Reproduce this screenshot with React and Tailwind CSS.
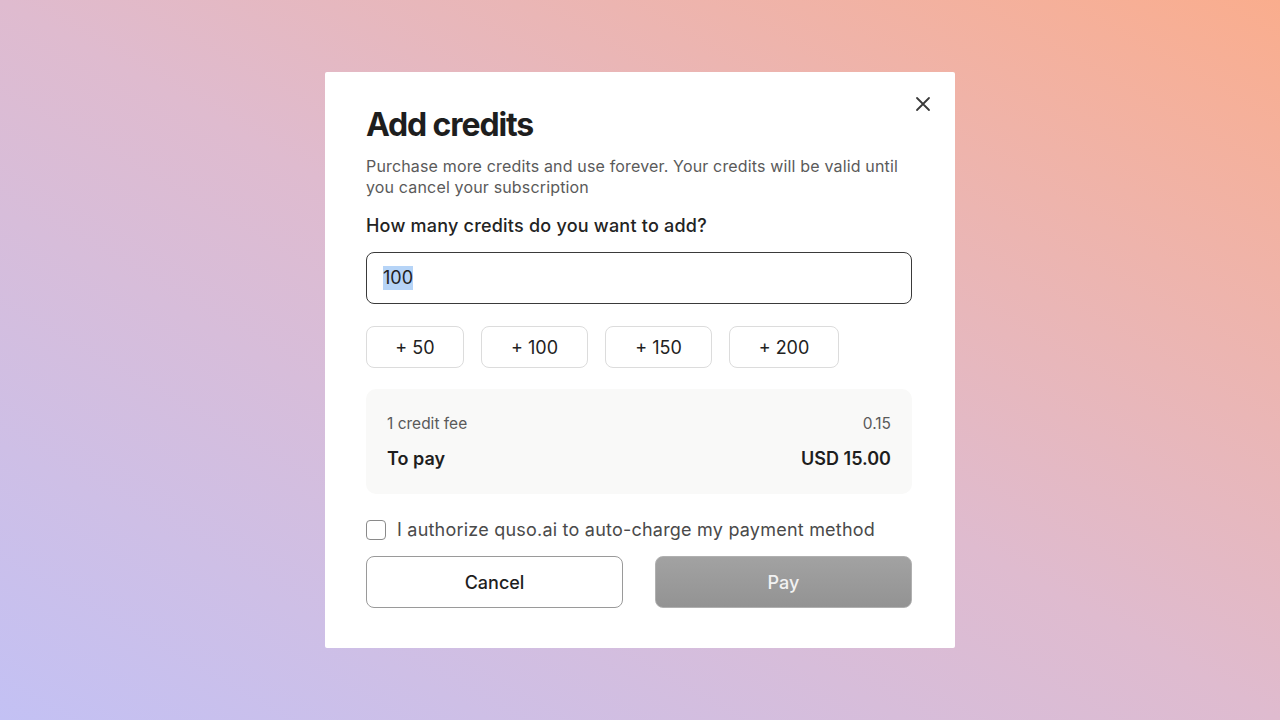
import React, { useState } from "react";

const quickAdds = [
  { label: "+ 50", w: "w-[98px]" },
  { label: "+ 100", w: "w-[107px]" },
  { label: "+ 150", w: "w-[107px]" },
  { label: "+ 200", w: "w-[110px]" },
];

export default function App() {
  const [agree, setAgree] = useState(false);

  return (
    <div
      className="w-full h-[720px] flex items-start justify-center pt-[72px] bg-gradient-to-tr from-[#c3c1f4] via-[#dfbbcf] to-[#faad8d]"
      style={{ fontFamily: "Inter, 'Noto Sans', sans-serif" }}
    >
      {/* Modal */}
      <div className="relative w-[630px] h-[576px] bg-white rounded-[2px] pl-[41px] pr-[43px] pt-[34px]">
        <button className="absolute right-[24px] top-[24px] text-[#3a3a3a]">
          <svg width="16" height="16" viewBox="0 0 16 16" fill="none" stroke="currentColor" strokeWidth="1.8" strokeLinecap="round">
            <path d="M2 2L14 14M14 2L2 14" />
          </svg>
        </button>

        <h1 className="text-[32px] leading-[38px] font-bold tracking-[-0.035em] text-[#1e1e1e]">Add credits</h1>
        <p className="mt-[12px] text-[16px] leading-[21px] tracking-[0.01em] text-[#5a5a5a]">
          Purchase more credits and use forever. Your credits will be valid until you cancel your subscription
        </p>

        <label className="block mt-[16px] text-[18px] leading-[24px] tracking-[0.012em] font-medium text-[#232323]">
          How many credits do you want to add?
        </label>

        <div className="mt-[14px] h-[52px] w-full border-[1.5px] border-[#3a3a3a] rounded-[8px] flex items-center px-[16px]">
          <span className="text-[18px] leading-[24px] text-[#222] bg-[#b6d4f7]">100</span>
        </div>

        <div className="mt-[22px] flex gap-[17px]">
          {quickAdds.map((q) => (
            <button
              key={q.label}
              className={`${q.w} h-[42px] border border-[#dcdcdc] rounded-[8px] text-[18px] text-[#222] bg-white`}
            >
              {q.label}
            </button>
          ))}
        </div>

        <div className="mt-[21px] h-[105px] bg-[#f9f9f8] rounded-[10px] px-[21px] pt-[24px]">
          <div className="flex justify-between text-[15.5px] leading-[22px] text-[#5a5a5a]">
            <span>1 credit fee</span>
            <span>0.15</span>
          </div>
          <div className="mt-[12px] flex justify-between text-[18px] leading-[24px] font-semibold text-[#1e1e1e]">
            <span>To pay</span>
            <span>USD 15.00</span>
          </div>
        </div>

        <label className="mt-[24px] flex items-center gap-[11px] cursor-pointer">
          <span
            onClick={() => setAgree(!agree)}
            className="w-[20px] h-[20px] border-[1.5px] border-[#8a8a8a] rounded-[4px] bg-white"
          />
          <span className="text-[18px] leading-[24px] tracking-[0.012em] text-[#4a4a4a]">
            I authorize quso.ai to auto-charge my payment method
          </span>
        </label>

        <div className="mt-[14px] flex gap-[32px]">
          <button className="flex-1 h-[52px] border border-[#9a9a9a] rounded-[8px] bg-white text-[18px] font-medium text-[#1e1e1e]">
            Cancel
          </button>
          <button className="flex-1 h-[52px] rounded-[8px] bg-gradient-to-b from-[#a2a2a2] to-[#939393] border border-[#b0b0b0] text-[18px] font-medium text-[#f2f2f2]">
            Pay
          </button>
        </div>
      </div>
    </div>
  );
}
